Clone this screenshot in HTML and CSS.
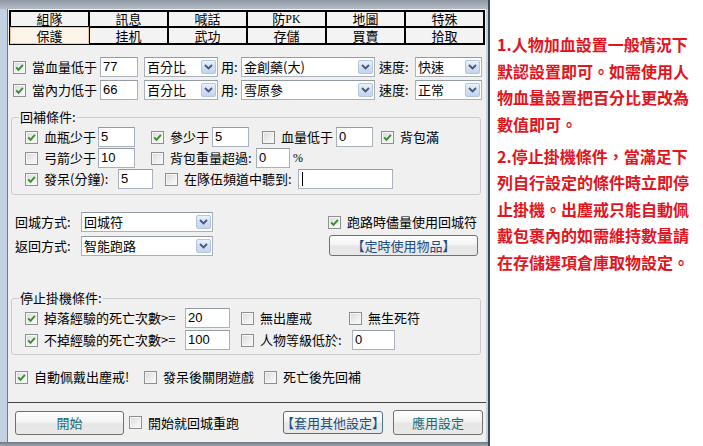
FILE: index.html
```html
<!DOCTYPE html>
<html lang="zh-Hant">
<head>
<meta charset="utf-8">
<title>保護設定</title>
<link rel="stylesheet" href="styles.css">
</head>
<body>
<div class="screen">
  <div class="win">
    <div class="panel">
      <div class="main">
        <div class="tabs">
          <div class="tab">組隊</div>
          <div class="tab">訊息</div>
          <div class="tab">喊話</div>
          <div class="tab">防<span class="lat">PK</span></div>
          <div class="tab">地圖</div>
          <div class="tab">特殊</div>
          <div class="tab on">保護</div>
          <div class="tab">挂机</div>
          <div class="tab">武功</div>
          <div class="tab">存儲</div>
          <div class="tab">買賣</div>
          <div class="tab">拾取</div>
        </div>

        <div class="row r-hp1">
          <label class="chk w87"><span class="cb"><svg width="9" height="9" viewBox="0 0 9 9"><path d="M1.2 4.4 L3.5 6.8 L7.9 1.9" fill="none" stroke="#3a8c2c" stroke-width="1.9"/></svg></span>當血量低于</label>
          <div class="tb w38">77</div>
          <div class="dd w74 ml6"><span class="v">百分比</span><span class="arr"><svg width="9" height="6" viewBox="0 0 9 6"><path d="M1 1 L4.5 4.5 L8 1" fill="none" stroke="#43597e" stroke-width="1.8"/></svg></span></div>
          <span class="lab w23 pl3">用:</span>
          <div class="dd w134"><span class="v">金創藥(大)</span><span class="arr"><svg width="9" height="6" viewBox="0 0 9 6"><path d="M1 1 L4.5 4.5 L8 1" fill="none" stroke="#43597e" stroke-width="1.8"/></svg></span></div>
          <span class="lab w40 pl4">速度:</span>
          <div class="dd w67"><span class="v">快速</span><span class="arr"><svg width="9" height="6" viewBox="0 0 9 6"><path d="M1 1 L4.5 4.5 L8 1" fill="none" stroke="#43597e" stroke-width="1.8"/></svg></span></div>
        </div>

        <div class="row r-hp2">
          <label class="chk w87"><span class="cb"><svg width="9" height="9" viewBox="0 0 9 9"><path d="M1.2 4.4 L3.5 6.8 L7.9 1.9" fill="none" stroke="#3a8c2c" stroke-width="1.9"/></svg></span>當內力低于</label>
          <div class="tb w38">66</div>
          <div class="dd w74 ml6"><span class="v">百分比</span><span class="arr"><svg width="9" height="6" viewBox="0 0 9 6"><path d="M1 1 L4.5 4.5 L8 1" fill="none" stroke="#43597e" stroke-width="1.8"/></svg></span></div>
          <span class="lab w23 pl3">用:</span>
          <div class="dd w134"><span class="v">雪原參</span><span class="arr"><svg width="9" height="6" viewBox="0 0 9 6"><path d="M1 1 L4.5 4.5 L8 1" fill="none" stroke="#43597e" stroke-width="1.8"/></svg></span></div>
          <span class="lab w40 pl4">速度:</span>
          <div class="dd w67"><span class="v">正常</span><span class="arr"><svg width="9" height="6" viewBox="0 0 9 6"><path d="M1 1 L4.5 4.5 L8 1" fill="none" stroke="#43597e" stroke-width="1.8"/></svg></span></div>
        </div>

        <fieldset class="grp g1">
          <legend>回補條件:</legend>
          <div class="row gr first">
            <label class="chk w73"><span class="cb"><svg width="9" height="9" viewBox="0 0 9 9"><path d="M1.2 4.4 L3.5 6.8 L7.9 1.9" fill="none" stroke="#3a8c2c" stroke-width="1.9"/></svg></span>血瓶少于</label>
            <div class="tb w37">5</div>
            <label class="chk w61 ml16"><span class="cb"><svg width="9" height="9" viewBox="0 0 9 9"><path d="M1.2 4.4 L3.5 6.8 L7.9 1.9" fill="none" stroke="#3a8c2c" stroke-width="1.9"/></svg></span>參少于</label>
            <div class="tb w37">5</div>
            <label class="chk w74 ml13"><span class="cb"></span>血量低于</label>
            <div class="tb w37">0</div>
            <label class="chk ml8"><span class="cb"><svg width="9" height="9" viewBox="0 0 9 9"><path d="M1.2 4.4 L3.5 6.8 L7.9 1.9" fill="none" stroke="#3a8c2c" stroke-width="1.9"/></svg></span>背包滿</label>
          </div>
          <div class="row gr">
            <label class="chk w73"><span class="cb"></span>弓箭少于</label>
            <div class="tb w37">10</div>
            <label class="chk w105 ml16"><span class="cb"></span>背包重量超過:</label>
            <div class="tb w34">0</div>
            <span class="lab pl3 pct">%</span>
          </div>
          <div class="row gr">
            <label class="chk w93"><span class="cb"><svg width="9" height="9" viewBox="0 0 9 9"><path d="M1.2 4.4 L3.5 6.8 L7.9 1.9" fill="none" stroke="#3a8c2c" stroke-width="1.9"/></svg></span>發呆(分鐘):</label>
            <div class="tb w35">5</div>
            <label class="chk w133 ml12"><span class="cb"></span>在隊伍頻道中聽到:</label>
            <div class="tb w95"><span class="caret"></span></div>
          </div>
        </fieldset>

        <div class="sec">
          <div class="sec-l">
            <div class="row">
              <span class="lab w66">回城方式:</span>
              <div class="dd w132"><span class="v">回城符</span><span class="arr"><svg width="9" height="6" viewBox="0 0 9 6"><path d="M1 1 L4.5 4.5 L8 1" fill="none" stroke="#43597e" stroke-width="1.8"/></svg></span></div>
            </div>
            <div class="row mt4">
              <span class="lab w66">返回方式:</span>
              <div class="dd w132"><span class="v">智能跑路</span><span class="arr"><svg width="9" height="6" viewBox="0 0 9 6"><path d="M1 1 L4.5 4.5 L8 1" fill="none" stroke="#43597e" stroke-width="1.8"/></svg></span></div>
            </div>
          </div>
          <div class="sec-r">
            <div class="row">
              <label class="chk"><span class="cb"><svg width="9" height="9" viewBox="0 0 9 9"><path d="M1.2 4.4 L3.5 6.8 L7.9 1.9" fill="none" stroke="#3a8c2c" stroke-width="1.9"/></svg></span>跑路時儘量使用回城符</label>
            </div>
            <div class="btn blue btn-timed">【定時使用物品】</div>
          </div>
        </div>

        <fieldset class="grp g2">
          <legend>停止掛機條件:</legend>
          <div class="row gr first">
            <label class="chk w160"><span class="cb"><svg width="9" height="9" viewBox="0 0 9 9"><path d="M1.2 4.4 L3.5 6.8 L7.9 1.9" fill="none" stroke="#3a8c2c" stroke-width="1.9"/></svg></span>掉落經驗的死亡次數&gt;=</label>
            <div class="tb w45">20</div>
            <label class="chk w108 ml11"><span class="cb"></span>無出塵戒</label>
            <label class="chk"><span class="cb"></span>無生死符</label>
          </div>
          <div class="row gr mt2">
            <label class="chk w160"><span class="cb"><svg width="9" height="9" viewBox="0 0 9 9"><path d="M1.2 4.4 L3.5 6.8 L7.9 1.9" fill="none" stroke="#3a8c2c" stroke-width="1.9"/></svg></span>不掉經驗的死亡次數&gt;=</label>
            <div class="tb w45">100</div>
            <label class="chk w111 ml11"><span class="cb"></span>人物等級低於:</label>
            <div class="tb w43">0</div>
          </div>
        </fieldset>

        <div class="row r-auto">
          <label class="chk w129"><span class="cb"><svg width="9" height="9" viewBox="0 0 9 9"><path d="M1.2 4.4 L3.5 6.8 L7.9 1.9" fill="none" stroke="#3a8c2c" stroke-width="1.9"/></svg></span>自動佩戴出塵戒!</label>
          <label class="chk w120"><span class="cb"></span>發呆後關閉遊戲</label>
          <label class="chk"><span class="cb"></span>死亡後先回補</label>
        </div>
      </div>

      <div class="bar">
        <div class="row bar-row">
          <div class="btn teal btn-start">開始</div>
          <label class="chk w154 ml5"><span class="cb"></span>開始就回城重跑</label>
          <div class="btn blue btn-apply-other">【套用其他設定】</div>
          <div class="btn teal btn-apply ml10">應用設定</div>
        </div>
      </div>
    </div>
  </div>

  <div class="notes">
    <p>1.人物加血設置一般情況下<br>默認設置即可。如需使用人<br>物血量設置把百分比更改為<br>數值即可。</p>
    <p>2.停止掛機條件，當滿足下<br>列自行設定的條件時立即停<br>止掛機。出塵戒只能自動佩<br>戴包裹內的如需維持數量請<br>在存儲選項倉庫取物設定。</p>
  </div>
</div>
</body>
</html>
```

FILE: styles.css
```css
* { box-sizing: border-box; }
html, body { margin: 0; padding: 0; }
body {
  width: 703px;
  height: 446px;
  overflow: hidden;
  background: #ffffff;
  font-family: "Noto Sans CJK TC", "Noto Sans CJK SC", sans-serif;
  font-size: 13px;
  color: #000;
}

.screen { display: flex; height: 446px; }

/* window frame */
.win {
  width: 490px;
  height: 446px;
  flex: none;
  padding: 9px 2px 0 7px;
  border-right: 2px solid #3c4754;
  background:
    linear-gradient(to bottom,
      #8f99a3 0px, #b3bcc6 9px,
      #c3d2e2 9px, #c3d2e2 442px,
      #6e7781 442px, #9ea8b3 446px);
}

.panel {
  width: 479px;
  height: 433px;
  background: #f0f0f0;
  border-left: 1px solid #6c7c8d;
  display: flex;
  flex-direction: column;
}

.main { height: 393px; flex: none; }

/* tabs */
.tabs {
  margin: 1px 0 0 1px;
  width: 476px;
  display: grid;
  grid-template-columns: repeat(6, 1fr);
  grid-template-rows: 16px 17px;
  border: 1px solid #000;
}
.tab {
  border: 1px solid #000;
  background: #f3f3f3;
  display: flex;
  align-items: center;
  justify-content: center;
  font-size: 13px;
  line-height: 14px;
  white-space: nowrap;
}
.tab.on {
  background: #fdf5e9;
  border-color: #eec591;
}
.lat { font-family: "Liberation Serif", serif; font-size: 12px; }

/* generic rows */
.row {
  display: flex;
  align-items: center;
  height: 20px;
}
.r-hp1 { margin-top: 12px; padding-left: 5px; }
.r-hp2 { margin-top: 3px; padding-left: 5px; }

.chk {
  display: flex;
  align-items: center;
  gap: 6px;
  flex: none;
  white-space: nowrap;
  line-height: 16px;
}
.cb {
  width: 13px;
  height: 13px;
  flex: none;
  border: 1px solid #8e8f8f;
  background: linear-gradient(135deg, #d6d8db 0%, #eceef0 55%, #fafafa 100%);
  box-shadow: inset 0 0 0 1px #f6f6f6;
  display: flex;
  align-items: center;
  justify-content: center;
}
.cb svg { display: block; }

.lab { flex: none; white-space: nowrap; line-height: 16px; }

/* text boxes */
.tb {
  height: 20px;
  flex: none;
  border: 1px solid #a9b2bc;
  border-top-color: #939ba4;
  background: #fff;
  padding-left: 2px;
  font-family: "Liberation Sans", "Noto Sans CJK TC", sans-serif;
  font-size: 13px;
  line-height: 18px;
  display: flex;
  align-items: center;
}
.caret {
  display: block;
  width: 1px;
  height: 14px;
  background: #000;
  margin-left: 1px;
}

/* dropdowns */
.dd {
  height: 20px;
  flex: none;
  border: 1px solid #a9b2bc;
  border-top-color: #939ba4;
  background: #fff;
  padding-left: 2px;
  display: flex;
  align-items: center;
}
.dd .v { flex: 1; line-height: 16px; white-space: nowrap; }
.dd .arr {
  width: 15px;
  height: 14px;
  margin-right: 1px;
  flex: none;
  border: 1px solid #b3c6de;
  border-radius: 2px;
  background: linear-gradient(#eaf1fb, #d2e0f3 50%, #c2d5ee);
  display: flex;
  align-items: center;
  justify-content: center;
}
.dd .arr svg { display: block; }

/* group boxes */
.grp {
  margin: 10px 0 0 3px;
  width: 470px;
  min-width: 0;
  padding: 0 0 5px 0;
  border: 1px solid #c9cdd1;
  border-radius: 3px;
}
.grp legend {
  margin-left: 7px;
  padding: 0 1px;
  font-size: 13px;
  line-height: 14px;
}
.g2 { margin-top: 35px; padding-bottom: 4px; }
.gr { padding-left: 13px; margin-top: 1px; }
.gr.first { margin-top: 3px; }
.pct { font-family: "Liberation Serif", serif; font-size: 12px; }

/* return-to-town section */
.sec { display: flex; margin-top: 17px; }
.sec-l { padding-left: 7px; flex: none; }
.sec-r { margin-left: 115px; flex: none; }

.r-auto { margin-top: 12px; padding-left: 7px; }

/* buttons */
.btn {
  flex: none;
  height: 24px;
  border: 1px solid #707070;
  border-radius: 3px;
  background: linear-gradient(#ffffff 0%, #f3f3f3 45%, #e6e6e6 55%, #e9e9e9 100%);
  display: flex;
  align-items: center;
  justify-content: center;
  font-size: 13px;
  line-height: 16px;
  white-space: nowrap;
}
.teal { color: #1d6a70; }
.blue { color: #1f4c82; }
.btn-timed { margin-left: 1px; margin-top: 3px; width: 149px; height: 21px; }
.btn-start { width: 109px; }
.btn-apply-other { width: 100px; height: 23px; border-color: #4d6d92; }
.btn-apply { width: 90px; height: 25px; }

/* bottom bar */
.bar { flex: 1; border-top: 1px solid #454545; }
.bar-row { height: 25px; margin-top: 7px; padding-left: 7px; }

/* width / margin utilities */
.w23 { width: 23px; } .w40 { width: 40px; } .w66 { width: 66px; }
.w34 { width: 34px; } .w35 { width: 35px; } .w37 { width: 37px; }
.w38 { width: 38px; } .w43 { width: 43px; } .w45 { width: 45px; }
.w61 { width: 61px; } .w67 { width: 67px; } .w73 { width: 73px; }
.w74 { width: 74px; } .w87 { width: 87px; } .w93 { width: 93px; }
.w95 { width: 95px; } .w105 { width: 105px; } .w108 { width: 108px; }
.w111 { width: 111px; } .w120 { width: 120px; } .w129 { width: 129px; }
.w132 { width: 132px; } .w133 { width: 133px; } .w134 { width: 134px; }
.w154 { width: 154px; } .w160 { width: 160px; }
.ml5 { margin-left: 5px; } .ml6 { margin-left: 6px; } .ml8 { margin-left: 8px; }
.ml10 { margin-left: 10px; } .ml11 { margin-left: 11px; } .ml12 { margin-left: 12px; }
.ml13 { margin-left: 13px; } .ml16 { margin-left: 16px; }
.pl3 { padding-left: 3px; } .pl4 { padding-left: 4px; }
.mt2 { margin-top: 2px; } .mt4 { margin-top: 4px; }

/* notes */
.notes {
  margin-left: 7px;
  padding-top: 31px;
  color: #e2141d;
  font-weight: 700;
  font-size: 16px;
  line-height: 26.5px;
  font-family: "Noto Sans CJK TC", "Noto Sans CJK SC", sans-serif;
}
.notes p { margin: 0; white-space: nowrap; }
.notes p + p { margin-top: 5.5px; }
```
